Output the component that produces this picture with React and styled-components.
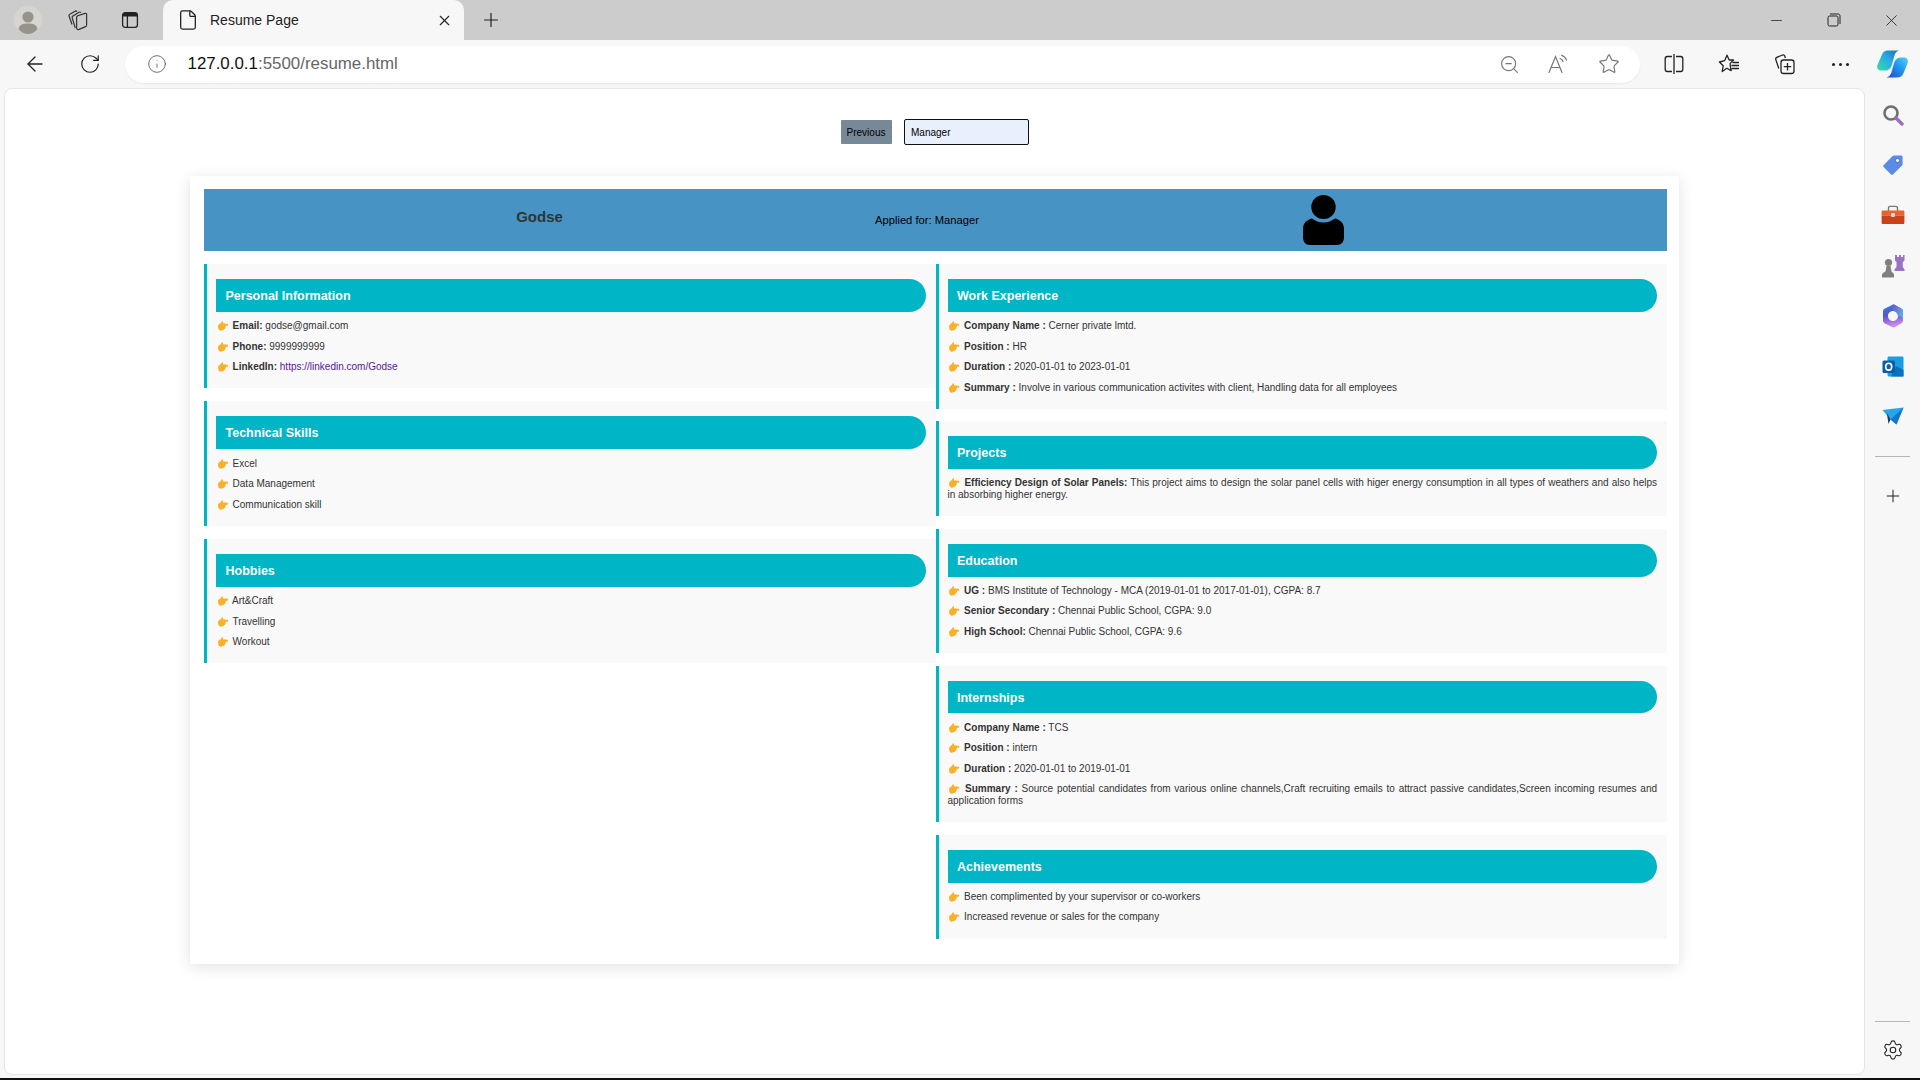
import styled, { createGlobalStyle } from 'styled-components';
import { ArrowLeft, RotateCw, Info, ZoomOut, Star, Plus, X, Minus, Settings, File } from 'lucide-react';

const GlobalStyle = createGlobalStyle`
    html, body {
        margin: 0;
        padding: 0;
        height: 100%;
        overflow: hidden;
        background: #f7f7f7;
    }
    * { box-sizing: border-box; }
`

//content of the two resume columns
const leftSections = [
    {
        title: 'Personal Information',
        rows: [
            { label: 'Email:', text: ' godse@gmail.com' },
            { label: 'Phone:', text: ' 9999999999' },
            { label: 'LinkedIn:', text: ' ', link: 'https://linkedin.com/Godse' },
        ],
    },
    {
        title: 'Technical Skills',
        rows: [{ text: 'Excel' }, { text: 'Data Management' }, { text: 'Communication skill' }],
    },
    {
        title: 'Hobbies',
        rows: [{ text: 'Art&Craft' }, { text: 'Travelling' }, { text: 'Workout' }],
    },
];

const rightSections = [
    {
        title: 'Work Experience',
        rows: [
            { label: 'Company Name :', text: ' Cerner private lmtd.' },
            { label: 'Position :', text: ' HR' },
            { label: 'Duration :', text: ' 2020-01-01 to 2023-01-01' },
            { label: 'Summary :', text: ' Involve in various communication activites with client, Handling data for all employees' },
        ],
    },
    {
        title: 'Projects',
        rows: [
            { label: 'Efficiency Design of Solar Panels:', text: ' This project aims to design the solar panel cells with higer energy consumption in all types of weathers and also helps in absorbing higher energy.' },
        ],
    },
    {
        title: 'Education',
        rows: [
            { label: 'UG :', text: ' BMS Institute of Technology - MCA (2019-01-01 to 2017-01-01), CGPA: 8.7' },
            { label: 'Senior Secondary :', text: ' Chennai Public School, CGPA: 9.0' },
            { label: 'High School:', text: ' Chennai Public School, CGPA: 9.6' },
        ],
    },
    {
        title: 'Internships',
        rows: [
            { label: 'Company Name :', text: ' TCS' },
            { label: 'Position :', text: ' intern' },
            { label: 'Duration :', text: ' 2020-01-01 to 2019-01-01' },
            { label: 'Summary :', text: ' Source potential candidates from various online channels,Craft recruiting emails to attract passive candidates,Screen incoming resumes and application forms' },
        ],
    },
    {
        title: 'Achievements',
        rows: [{ text: 'Been complimented by your supervisor or co-workers' }, { text: 'Increased revenue or sales for the company' }],
    },
];

const HandIcon = () => (
    <Hand viewBox="0 0 10 9.5">
        <path fill="#fbb02a" d="M0 5C0 3.6 1.5 3 2.5 2.2L3.6 0.4C4.2 -0.1 5 0.4 4.8 1.4L4.6 2.2L9 2.6C10.2 2.8 10.2 4.4 9 4.4L7.6 4.6C7.6 5.4 7.4 6 7 6.2C7 7 6.6 7.6 6 7.7C5.8 8.6 5 8.8 4.2 8.8L2.6 9.2C1 9.4 0 7.5 0 5Z" />
    </Hand>
)

const ResumeSection = ({ title, rows }) => (
    <Section>
        <SectionTitle>{title}</SectionTitle>
        <RowList>
            {rows.map((row) => (
                <Row key={row.label || row.text}>
                    <HandIcon /> {row.label && <RowLabel>{row.label}</RowLabel>}{row.text}
                    {row.link && <RowLink href="#">{row.link}</RowLink>}
                </Row>
            ))}
        </RowList>
    </Section>
)

const ProfileIcon = () => (
    <svg width="28" height="28" viewBox="0 0 28 28">
        <circle cx="14" cy="14" r="14" fill="#d6d5d0" />
        <circle cx="14" cy="11" r="5.6" fill="#96938d" />
        <path fill="#96938d" d="M4.5 23C5.5 18.5 9 17.5 14 17.5C19 17.5 22.5 18.5 23.5 23C21 26.5 17.5 28 14 28C10.5 28 7 26.5 4.5 23Z" />
    </svg>
)

const CollectionsIcon = () => (
    <svg width="24" height="24" viewBox="0 0 24 24" fill="none" stroke="#333" strokeWidth="1.2" strokeLinejoin="round">
        <path d="M6 16.5L3 7.8C2.8 7 3.1 6.5 3.8 6.2L9 3.2C9.8 2.8 10.4 3 10.8 3.8" />
        <path d="M9.2 20L6.2 9.6C6 8.8 6.3 8.2 7 7.9L13 4.2C13.8 3.8 14.5 4 14.8 4.8" />
        <path d="M10.6 9.4C10.6 8.6 11 8.1 11.8 7.8L19 5.4C20 5.2 20.6 5.7 20.6 6.6V17C20.6 17.8 20.3 18.3 19.6 18.6L13 21.4C11.6 21.9 10.6 21.2 10.6 20Z" />
    </svg>
)

const TabActionsIcon = () => (
    <svg width="20" height="20" viewBox="0 0 20 20" fill="none">
        <rect x="2.6" y="2.6" width="14.8" height="14.8" rx="2.6" stroke="#222" strokeWidth="1.3" />
        <path d="M3 5C3 3.6 3.6 3 5 3H15C16.4 3 17 3.6 17 5V6.4H3Z" fill="#222" />
        <path d="M7.4 6V17" stroke="#222" strokeWidth="1.3" />
    </svg>
)

const ReadAloudIcon = () => (
    <svg width="24" height="22" viewBox="0 0 24 22" fill="none" stroke="#777" strokeWidth="1.2" strokeLinecap="round">
        <path d="M2 19.5L8.5 3.5L15 19.5M4.2 14.5H12.8" />
        <path d="M13 5.5C14.5 6 15.5 7 16 8.5M14.5 2.2C17 3 18.8 4.8 19.5 7.2" />
    </svg>
)

const SplitIcon = () => (
    <svg width="22" height="22" viewBox="0 0 22 22" fill="none" stroke="#222" strokeWidth="1.3">
        <path d="M9 3.5H4.4C3 3.5 2.2 4.3 2.2 5.7V16.3C2.2 17.7 3 18.5 4.4 18.5H9" />
        <path d="M13 3.5H17.6C19 3.5 19.8 4.3 19.8 5.7V16.3C19.8 17.7 19 18.5 17.6 18.5H13" />
        <path d="M11 1V21" />
    </svg>
)

const FavoritesIcon = () => (
    <svg width="22" height="22" viewBox="0 0 22 22" fill="none" stroke="#222" strokeWidth="1.3" strokeLinejoin="round" strokeLinecap="round">
        <path d="M9 2.2L11.2 7H15.5L12.2 10.4V12.6L13.2 17.6L8.8 15.2L4.2 18.5L5.2 12.8L1.4 9L6.7 7.6Z" />
        <path d="M15 9.5H20.5M14 12.5H20.5M14 15.5H20.5" />
    </svg>
)

const AddCollectionIcon = () => (
    <svg width="22" height="22" viewBox="0 0 22 22" fill="none" stroke="#222" strokeWidth="1.3" strokeLinejoin="round">
        <path d="M4.8 15.5L1.8 6.6C1.5 5.6 1.9 4.8 2.8 4.4L8.5 2C9.6 1.6 10.4 2 10.8 3L11.4 5" />
        <rect x="7" y="7" width="13" height="13.5" rx="2.5" />
        <path d="M13.5 10V17.5M9.8 13.7H17.2" />
    </svg>
)

const RestoreIcon = () => (
    <svg width="14" height="14" viewBox="0 0 14 14" fill="none" stroke="#222" strokeWidth="1">
        <rect x="1" y="3" width="10" height="10" rx="1.6" />
        <path d="M3 1H11C12.2 1 13 1.8 13 3V11" />
    </svg>
)

const CopilotIcon = () => (
    <svg width="31" height="28" viewBox="0 0 31 28">
        <defs>
            <linearGradient id="copA" x1="0" y1="1" x2="1" y2="0">
                <stop offset="0" stopColor="#35e0a0" />
                <stop offset="0.55" stopColor="#2aa8e8" />
                <stop offset="1" stopColor="#1a6ea8" />
            </linearGradient>
            <linearGradient id="copB" x1="0" y1="1" x2="1" y2="0">
                <stop offset="0" stopColor="#2a3fd0" />
                <stop offset="0.55" stopColor="#1f97ee" />
                <stop offset="1" stopColor="#55d0f5" />
            </linearGradient>
        </defs>
        <path fill="url(#copA)" d="M11 0.5H22C19.5 1.2 18.2 3 17.5 5.6L15 14.5C14 18 12 20.5 8.5 20.5H4C1 20.5 -0.6 18 0.4 15.2L5 4.5C6 1.8 8 0.5 11 0.5Z" />
        <path fill="url(#copB)" d="M20 27.5H9.5C12 26.8 13.6 25 14.4 22.4L16.8 14C17.8 10.5 20 7.6 23.5 7.6H27C30.2 7.6 31.6 10.2 30.6 13L26.4 23.5C25.4 26.2 23 27.5 20 27.5Z" />
    </svg>
)

const SearchColorIcon = () => (
    <svg width="22" height="22" viewBox="0 0 22 22" fill="none">
        <circle cx="9" cy="9" r="6.5" stroke="#6f6f6f" strokeWidth="2.6" />
        <path d="M14 14L20 20" stroke="#9a6cc8" strokeWidth="3.4" strokeLinecap="round" />
    </svg>
)

const TagColorIcon = () => (
    <svg width="22" height="22" viewBox="0 0 22 22">
        <path fill="#5b8be6" d="M12 1.5H19C20 1.5 20.6 2.2 20.6 3V10.2C20.6 10.8 20.4 11.2 20 11.6L11.2 20.2C10.5 20.9 9.5 20.9 8.8 20.2L1.8 13.3C1.1 12.6 1.1 11.6 1.8 10.9L10.6 2.1C11 1.7 11.4 1.5 12 1.5Z" />
        <circle cx="15.5" cy="6.5" r="2" fill="#fff" stroke="#3a5fb8" strokeWidth="0.8" />
    </svg>
)

const ToolboxIcon = () => (
    <svg width="24" height="20" viewBox="0 0 24 20">
        <path d="M7.5 6V3.2C7.5 2 8.2 1.4 9.4 1.4H14.6C15.8 1.4 16.5 2 16.5 3.2V6" fill="none" stroke="#777" strokeWidth="1.4" />
        <path fill="#e8622a" d="M2 5.5H22C23 5.5 23.4 6 23.4 7V10.5H0.6V7C0.6 6 1 5.5 2 5.5Z" />
        <path fill="#c9431a" d="M0.6 10.5H23.4V17.5C23.4 18.5 23 19 22 19H2C1 19 0.6 18.5 0.6 17.5Z" />
        <rect x="10" y="8" width="4" height="4" rx="1" fill="#d9d9d9" />
    </svg>
)

const ChessIcon = () => (
    <svg width="24" height="24" viewBox="0 0 24 24">
        <path fill="#9a72c6" d="M14 1H16V3H18V1H20V3H22V1H23.5V6.5L21.8 8V13L23.5 15.5V17H13.5V15.5L15.5 13V8L14 6.5Z" />
        <circle cx="7.5" cy="8.5" r="3.6" fill="#808080" />
        <path fill="#808080" d="M5.5 12H9.5L10.5 17.5L13 20V23.5H1V21C1 20 1.6 19.4 2.4 18.8L4.6 17.2Z" />
    </svg>
)

const M365Icon = () => (
    <svg width="22" height="24" viewBox="0 0 22 24">
        <defs>
            <linearGradient id="msA" x1="0" y1="0" x2="0.2" y2="1">
                <stop offset="0" stopColor="#2f7fd8" />
                <stop offset="0.5" stopColor="#5a55c8" />
                <stop offset="1" stopColor="#d08be8" />
            </linearGradient>
            <linearGradient id="msB" x1="0" y1="0" x2="1" y2="1">
                <stop offset="0" stopColor="#7a50c8" />
                <stop offset="1" stopColor="#4fc3f0" />
            </linearGradient>
        </defs>
        <path fill="url(#msA)" fillRule="evenodd" d="M10 1C11 0.4 12 0.4 13 1L19.5 4.8C20.5 5.4 21 6.4 21 7.5V16.5C21 17.6 20.5 18.6 19.5 19.2L13 23C12 23.6 11 23.6 10 23L2.5 19.2C1.5 18.6 1 17.6 1 16.5V7.5C1 6.4 1.5 5.4 2.5 4.8ZM11 7C8.2 7 6 9.2 6 12C6 14.8 8.2 17 11 17C13.8 17 16 14.8 16 12C16 9.2 13.8 7 11 7Z" />
        <path fill="url(#msB)" d="M11 0.6C12 0.6 12.6 0.8 13 1L19.5 4.8C20.5 5.4 21 6.4 21 7.5V14C19.8 12.5 18 12.2 16 12C16 9.2 13.8 7 11 7Z" />
    </svg>
)

const OutlookIcon = () => (
    <svg width="22" height="21" viewBox="0 0 22 21">
        <path fill="#1a9ee0" d="M7 0.5H20C21 0.5 21.5 1 21.5 2V19C21.5 20 21 20.5 20 20.5H7C6 20.5 5.5 20 5.5 19V2C5.5 1 6 0.5 7 0.5Z" />
        <path fill="#0f6fbd" d="M14 10L21.5 14V20.5H9Z" />
        <rect x="0.5" y="4.5" width="12.5" height="12.5" rx="1.5" fill="#0a5ea8" />
        <ellipse cx="6.7" cy="10.7" rx="3" ry="3.4" fill="none" stroke="#fff" strokeWidth="1.6" />
    </svg>
)

const SendIcon = () => (
    <svg width="22" height="18" viewBox="0 0 22 18">
        <path fill="#29a6ea" d="M0.5 3L21.5 0.5L14.5 17.5L8.5 12.5Z" />
        <path fill="#0f78c8" d="M21.5 0.5L8.5 12.5L14.5 17.5Z" />
        <path fill="#173a66" d="M5 6L8.5 12.5L6.5 17L5.5 10.5Z" />
    </svg>
)

const App = () => {
    return (
        <Screen>
            <GlobalStyle />
            <TabStrip>
                <Slot $w="40px" $ml="8px"><ProfileIcon /></Slot>
                <Slot $w="59px"><CollectionsIcon /></Slot>
                <Slot $w="46px"><TabActionsIcon /></Slot>
                <Tab>
                    <File size={22} strokeWidth={1.4} color="#222" />
                    <TabTitle>Resume Page</TabTitle>
                    <X size={17} strokeWidth={1.6} color="#222" />
                </Tab>
                <Slot $w="53px"><Plus size={22} strokeWidth={1.3} color="#222" /></Slot>
                <WindowControls>
                    <Slot $w="56.5px"><Minus size={17} strokeWidth={1.1} color="#222" /></Slot>
                    <Slot $w="57px"><RestoreIcon /></Slot>
                    <Slot $w="58px"><X size={19} strokeWidth={1.1} color="#222" /></Slot>
                </WindowControls>
            </TabStrip>

            <Toolbar>
                <Slot $w="55px" $ml="7.5px"><ArrowLeft size={24} strokeWidth={1.3} color="#222" /></Slot>
                <Slot $w="55px"><RotateCw size={22} strokeWidth={1.3} color="#222" /></Slot>
                <AddressBar>
                    <Info size={20} strokeWidth={1.1} color="#666" />
                    <Url><UrlHost>127.0.0.1</UrlHost>:5500/resume.html</Url>
                    <AddressActions>
                        <ZoomOut size={21} strokeWidth={1.3} color="#777" />
                        <ReadAloudIcon />
                        <Star size={22} strokeWidth={1.3} color="#777" />
                    </AddressActions>
                </AddressBar>
                <Slot $w="55.5px" $ml="6.5px"><SplitIcon /></Slot>
                <Slot $w="55.5px"><FavoritesIcon /></Slot>
                <Slot $w="55.5px"><AddCollectionIcon /></Slot>
                <Slot $w="55.5px"><MoreDots /></Slot>
                <Slot $w="49px"><CopilotIcon /></Slot>
            </Toolbar>

            <Body>
                <Page>
                    <Controls>
                        <PreviousButton>Previous</PreviousButton>
                        <RoleInput defaultValue="Manager" />
                    </Controls>
                    <ResumeCard>
                        <ResumeHeader>
                            <Name>Godse</Name>
                            <Applied>Applied for: Manager</Applied>
                            <svg width="41" height="50" viewBox="0 0 41 50">
                                <ellipse cx="20.5" cy="12" rx="12.2" ry="12" fill="#000" />
                                <path fill="#000" d="M0 42V34C0 28 3.5 24.8 9 23.4C12 25.6 16 27.6 20.5 27.6C25 27.6 29 25.6 32 23.4C37.5 24.8 41 28 41 34V42C41 47 38.5 50 34 50H7C2.5 50 0 47 0 42Z" />
                            </svg>
                        </ResumeHeader>
                        <Columns>
                            <Column $gap="13.2px">
                                {leftSections.map((section) => <ResumeSection key={section.title} {...section} />)}
                            </Column>
                            <Column $gap="12.4px">
                                {rightSections.map((section) => <ResumeSection key={section.title} {...section} />)}
                            </Column>
                        </Columns>
                    </ResumeCard>
                </Page>
                <Sidebar>
                    <SideSlot><SearchColorIcon /></SideSlot>
                    <SideSlot><TagColorIcon /></SideSlot>
                    <SideSlot><ToolboxIcon /></SideSlot>
                    <SideSlot><ChessIcon /></SideSlot>
                    <SideSlot><M365Icon /></SideSlot>
                    <SideSlot><OutlookIcon /></SideSlot>
                    <SideSlot><SendIcon /></SideSlot>
                    <SideDivider $mt="14.5px" $mb="14.5px" />
                    <SideSlot><Plus size={20} strokeWidth={1.2} color="#222" /></SideSlot>
                    <SideFooter>
                        <SideDivider $mb="2.5px" />
                        <SideSlot><Settings size={22} strokeWidth={1.2} color="#222" /></SideSlot>
                    </SideFooter>
                </Sidebar>
            </Body>
            <ScreenEdge />
        </Screen>
    )
}

const Screen = styled.div`
        width: 1920px;
        height: 1080px;
        display: flex;
        flex-direction: column;
        background: #f7f7f7;
        font-family: 'Liberation Sans', Arial, sans-serif;
        overflow: hidden;
`

const TabStrip = styled.div`
        height: 40px;
        flex: none;
        display: flex;
        align-items: stretch;
        background: #cccccc;
`

const Slot = styled.div`
        width: ${(props) => props.$w};
        margin-left: ${(props) => props.$ml || '0'};
        flex: none;
        display: flex;
        align-items: center;
        justify-content: center;
`

const Tab = styled.div`
        width: 301px;
        margin-left: 10px;
        flex: none;
        display: flex;
        align-items: center;
        padding: 0 11px 0 14px;
        background: #f7f7f7;
        border-radius: 10px 10px 0 0;
`

const TabTitle = styled.span`
        flex: 1;
        margin-left: 11px;
        font-size: 14px;
        color: #222;
`

const WindowControls = styled.div`
        display: flex;
        margin-left: auto;
`

const Toolbar = styled.div`
        height: 48px;
        flex: none;
        display: flex;
        align-items: center;
        background: #f7f7f7;
`

const AddressBar = styled.div`
        width: 1515px;
        height: 37px;
        margin-left: 7px;
        flex: none;
        display: flex;
        align-items: center;
        padding: 0 19.5px 0 22px;
        background: #fff;
        border-radius: 18.5px;
        box-shadow: 0 1px 2px rgba(0, 0, 0, 0.06);
`

const Url = styled.span`
        flex: 1;
        margin-left: 21px;
        font-size: 16.9px;
        color: #666;
`

const UrlHost = styled.span`
        color: #111;
`

const AddressActions = styled.div`
        display: flex;
        align-items: center;
        gap: 27px;
`

const MoreDots = styled.span`
        width: 3px;
        height: 3px;
        border-radius: 50%;
        background: #222;
        box-shadow: -7px 0 0 #222, 7px 0 0 #222;
`

const Body = styled.div`
        flex: 1;
        min-height: 0;
        display: flex;
        padding: 0 0 2.5px 4px;
`

const Page = styled.div`
        flex: 1;
        display: flex;
        flex-direction: column;
        align-items: center;
        padding-top: 30px;
        background: #fff;
        border: 1px solid #e6e6e6;
        border-radius: 8px;
`

const Controls = styled.div`
        display: flex;
        align-items: center;
        gap: 12px;
`

const PreviousButton = styled.button`
        width: 51px;
        height: 24px;
        padding: 0;
        border: none;
        border-radius: 1px;
        background: #778899;
        color: #000;
        font-family: 'Liberation Sans', Arial, sans-serif;
        font-size: 10px;
`

const RoleInput = styled.input`
        width: 125px;
        height: 26px;
        padding: 0 6.5px;
        border: 1.5px solid #111;
        border-radius: 2px;
        background: #e8f0fe;
        color: #000;
        font-family: 'Liberation Sans', Arial, sans-serif;
        font-size: 10px;
        outline: none;
`

const ResumeCard = styled.div`
        width: 1489px;
        margin-top: 31px;
        padding: 13px 12px 25px 14px;
        background: #fff;
        box-shadow: 0 3px 14px rgba(0, 0, 0, 0.12);
`

const ResumeHeader = styled.div`
        height: 62px;
        display: grid;
        grid-template-columns: 671px 428px auto;
        align-items: center;
        background: #4793c4;
`

const Name = styled.div`
        margin-bottom: 8px;
        text-align: center;
        font-size: 15px;
        font-weight: bold;
        color: #333;
`

const Applied = styled.div`
        font-size: 11.2px;
        color: #000;
`

const Columns = styled.div`
        display: grid;
        grid-template-columns: 1fr 1fr;
        align-items: start;
        margin-top: 13px;
`

const Column = styled.div`
        display: flex;
        flex-direction: column;
        gap: ${(props) => props.$gap};
`

const Section = styled.section`
        padding: 15px 10px 11px 9px;
        background: #f9f9f9;
        border-left: 3px solid #00b5c5;
`

const SectionTitle = styled.h2`
        height: 32.8px;
        margin: 0;
        padding-left: 9.5px;
        background: #00b5c5;
        border-radius: 0 17px 17px 0;
        color: #fff;
        font-size: 12.5px;
        font-weight: bold;
        line-height: 34px;
`

const RowList = styled.div`
        padding-top: 4px;
`

const Row = styled.p`
        margin: 0;
        padding: 4.25px 0;
        font-size: 10px;
        line-height: 12px;
        color: #333;
        text-align: justify;
`

const RowLabel = styled.strong`
        font-weight: bold;
        color: #333;
`

const RowLink = styled.a`
        color: #551a8b;
        text-decoration: none;
`

const Hand = styled.svg`
        display: inline-block;
        width: 10.5px;
        height: 10px;
        margin: 0 1.8px 0 1.5px;
        vertical-align: -2px;
`

const Sidebar = styled.aside`
        width: 55px;
        flex: none;
        display: flex;
        flex-direction: column;
        align-items: center;
        padding-top: 2px;
`

const SideSlot = styled.div`
        width: 100%;
        height: 50.2px;
        flex: none;
        display: flex;
        align-items: center;
        justify-content: center;
`

const SideDivider = styled.div`
        width: 35px;
        height: 1px;
        flex: none;
        margin-top: ${(props) => props.$mt || '0'};
        margin-bottom: ${(props) => props.$mb || '0'};
        background: #b5b5b5;
`

const SideFooter = styled.div`
        width: 100%;
        margin-top: auto;
        display: flex;
        flex-direction: column;
        align-items: center;
`

const ScreenEdge = styled.div`
        height: 2.5px;
        flex: none;
        background: #111;
`

export default App;
